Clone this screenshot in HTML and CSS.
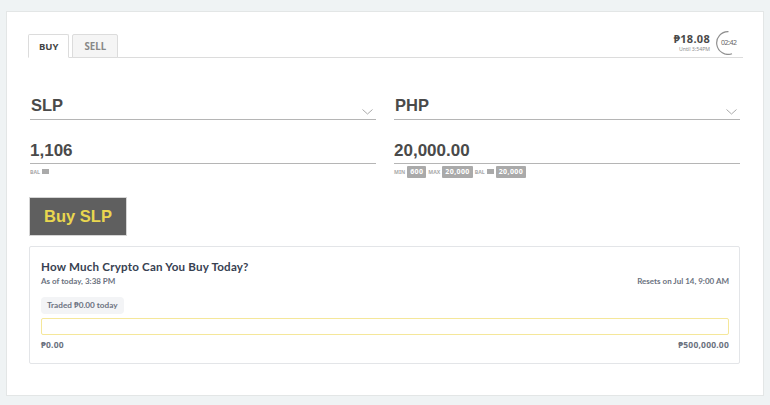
FILE: index.html
```html
<!DOCTYPE html>
<html lang="en">
<head>
<meta charset="utf-8">
<title>Buy SLP</title>
<link rel="stylesheet" href="styles.css">
</head>
<body>
<main class="card">
  <header class="top">
    <nav class="tabs">
      <div class="tab active">BUY</div>
      <div class="tab">SELL</div>
    </nav>
    <div class="rate">
      <div class="rate-text">
        <div class="price">₱18.08</div>
        <div class="until">Until 3:54PM</div>
      </div>
      <div class="timer">
        <svg class="ring" width="24" height="24" viewBox="0 0 24 24"><path d="M12.5 .6A11.4 11.4 0 1 0 16 22.7" fill="none" stroke="#8f8f8f" stroke-width="1.2"/></svg>
        <span class="time">02:42</span>
      </div>
    </div>
  </header>
  <section class="fields">
    <div class="col">
      <div class="select">
        <span class="code">SLP</span>
        <svg class="chev" width="11" height="6" viewBox="0 0 11 6"><path d="M.5.5l5 4.5 5-4.5" fill="none" stroke="#aaa" stroke-width="1"/></svg>
      </div>
      <div class="amount">1,106</div>
      <div class="meta">
        <span class="lbl">BAL</span>
        <svg class="wallet" width="7" height="5" viewBox="0 0 7 5"><rect width="7" height="5" fill="#aaa"/></svg>
      </div>
    </div>
    <div class="col">
      <div class="select">
        <span class="code">PHP</span>
        <svg class="chev" width="11" height="6" viewBox="0 0 11 6"><path d="M.5.5l5 4.5 5-4.5" fill="none" stroke="#aaa" stroke-width="1"/></svg>
      </div>
      <div class="amount">20,000.00</div>
      <div class="meta">
        <span class="lbl">MIN</span><span class="chip">600</span>
        <span class="lbl">MAX</span><span class="chip">20,000</span>
        <span class="lbl">BAL</span>
        <svg class="wallet" width="7" height="5" viewBox="0 0 7 5"><rect width="7" height="5" fill="#aaa"/></svg>
        <span class="chip">20,000</span>
      </div>
    </div>
  </section>
  <button class="buy" type="button">Buy SLP</button>
  <section class="limit">
    <h2 class="limit-title">How Much Crypto Can You Buy Today?</h2>
    <div class="row sub">
      <span>As of today, 3:38 PM</span>
      <span>Resets on Jul 14, 9:00 AM</span>
    </div>
    <div class="traded">Traded ₱0.00 today</div>
    <div class="bar"></div>
    <div class="row ends">
      <span>₱0.00</span>
      <span>₱500,000.00</span>
    </div>
  </section>
</main>
</body>
</html>
```
FILE: styles.css
```css
* { box-sizing: border-box; }
html, body { margin: 0; height: 405px; overflow: hidden; }
body {
  background: #eff3f4;
  padding: 11px 6px 9px;
  font-family: "Noto Sans", "Open Sans", sans-serif;
}
.card {
  height: 385px;
  background: #fff;
  border: 1px solid #e3e6e6;
  padding: 21px 23px 0;
}
.top {
  display: flex;
  justify-content: space-between;
  align-items: flex-end;
  height: 25px;
  border-bottom: 1px solid #dcdcdc;
  margin-left: -2px;
  margin-right: -3px;
}
.tabs { display: flex; gap: 3px; margin-bottom: -1px; }
.tab {
  height: 24px;
  padding: 0 11px;
  background: #f5f5f5;
  border: 1px solid #dcdcdc;
  border-radius: 2px 2px 0 0;
  font-size: 9.7px;
  font-weight: 700;
  line-height: 23px;
  color: #888;
}
.tab.active {
  padding: 0 10px;
  background: #fff;
  border-bottom-color: #fff;
  font-size: 9.5px;
  color: #444;
}
.rate { display: flex; align-items: center; gap: 6px; margin-bottom: 2px; margin-right: 3px; }
.rate-text { text-align: right; }
.price { font-size: 11px; font-weight: 700; line-height: 12px; margin-bottom: 1px; color: #4a4a4a; letter-spacing: .3px; }
.until { font-size: 5.2px; line-height: 7px; color: #8a8a8a; }
.timer { position: relative; width: 24px; height: 24px; }
.ring { display: block; }
.time {
  position: absolute;
  left: 5px;
  top: 7px;
  font-size: 7px;
  line-height: 10px;
  color: #666;
  letter-spacing: -.5px;
}
.fields { display: flex; gap: 18px; margin-top: 35px; }
.col { flex: 1; min-width: 0; }
.select {
  display: flex;
  justify-content: space-between;
  align-items: flex-end;
  height: 27px;
  border-bottom: 1px solid #b5b5b5;
  padding: 0 2px 4px 1px;
}
.code {
  font-family: "Liberation Sans", Arial, sans-serif;
  font-size: 16.5px;
  font-weight: 700;
  line-height: 20px;
  color: #4a4a4a;
}
.chev { margin-right: 1px; }
.amount {
  margin-top: 17px;
  height: 27px;
  border-bottom: 1px solid #b5b5b5;
  font-family: "Liberation Sans", Arial, sans-serif;
  font-size: 17px;
  font-weight: 700;
  line-height: 27px;
  color: #4a4a4a;
}
.meta {
  display: flex;
  align-items: center;
  gap: 2px;
  height: 13px;
  margin-top: 1px;
}
.lbl { font-size: 5.2px; font-weight: 700; color: #aaa; }
.wallet { margin: 0; }
.chip {
  height: 12px;
  padding: 0 3px;
  background: #aaa;
  border-radius: 1px;
  font-size: 7px;
  font-weight: 700;
  line-height: 12px;
  color: #fff;
  letter-spacing: .4px;
}
.buy {
  display: block;
  width: 98px;
  height: 39px;
  margin: 19px 0 0 -1px;
  padding: 0;
  background: #5f5f5f;
  border: 1px solid #d5d5d5;
  border-radius: 0;
  font-family: "Liberation Sans", Arial, sans-serif;
  font-size: 16.5px;
  font-weight: 700;
  color: #e9d64f;
}
.limit {
  height: 118px;
  margin-top: 10px;
  margin-left: -1px;
  padding: 12px 10px 0 11px;
  border: 1px solid #e3e5e8;
  border-radius: 2px;
  color: #6b7280;
}
.limit-title {
  margin: 0;
  font-family: "Lato", "Noto Sans", sans-serif;
  font-size: 11.6px;
  font-weight: 700;
  line-height: 15px;
  color: #374151;
  letter-spacing: .2px;
}
.row { display: flex; justify-content: space-between; }
.sub { font-family: "Lato", "Noto Sans", sans-serif; font-size: 8px; font-weight: 700; line-height: 12px; margin-top: 1px; }
.traded {
  width: max-content;
  height: 17px;
  margin-top: 10px;
  padding: 0 6px;
  background: #f3f4f6;
  border-radius: 4px;
  font-family: "Lato", "Noto Sans", sans-serif;
  font-size: 8.2px;
  font-weight: 700;
  line-height: 17px;
}
.bar {
  height: 17px;
  margin-top: 4px;
  background: #fff;
  border: 1px solid #f5e79a;
  border-radius: 2px;
}
.ends { margin-top: 4px; font-size: 8.5px; font-weight: 700; line-height: 12px; letter-spacing: .2px; }
```
